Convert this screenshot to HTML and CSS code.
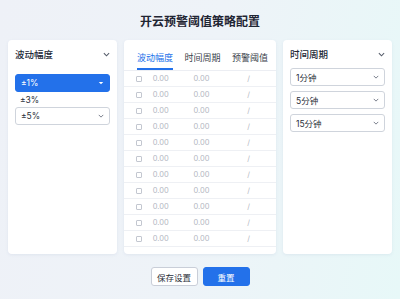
FILE: index.html
```html
<!DOCTYPE html>
<html lang="zh-CN">
<head>
    <meta charset="UTF-8" />
    <title>开云预警阈值策略配置</title>
    <link rel="stylesheet" href="styles.css">
</head>
<body>
    <div class="page">
        <h1 class="page_title">开云预警阈值策略配置</h1>

        <div class="columns">
            <!-- 波动幅度 -->
            <div class="card side_card">
                <div class="card_head">
                    <span>波动幅度</span>
                    <svg class="chev" viewBox="0 0 8 5"><path d="M1 1l3 3 3-3" /></svg>
                </div>
                <div class="amp_list">
                    <div class="select active">
                        <span>±1%</span>
                        <svg class="caret" viewBox="0 0 8 5"><path d="M1 1h6L4 4z" /></svg>
                    </div>
                    <div class="option_text">±3%</div>
                    <div class="select">
                        <span>±5%</span>
                        <svg class="chev" viewBox="0 0 8 5"><path d="M1 1l3 3 3-3" /></svg>
                    </div>
                </div>
            </div>

            <!-- table -->
            <div class="card table_card">
                <div class="tabs">
                    <span class="tab current">波动幅度</span>
                    <span class="tab">时间周期</span>
                    <span class="tab">预警阈值</span>
                </div>
                <div class="rows" id="rows"></div>
            </div>

            <!-- 时间周期 -->
            <div class="card side_card">
                <div class="card_head">
                    <span>时间周期</span>
                    <svg class="chev" viewBox="0 0 8 5"><path d="M1 1l3 3 3-3" /></svg>
                </div>
                <div class="period_list">
                    <div class="select">
                        <span>1分钟</span>
                        <svg class="chev" viewBox="0 0 8 5"><path d="M1 1l3 3 3-3" /></svg>
                    </div>
                    <div class="select">
                        <span>5分钟</span>
                        <svg class="chev" viewBox="0 0 8 5"><path d="M1 1l3 3 3-3" /></svg>
                    </div>
                    <div class="select">
                        <span>15分钟</span>
                        <svg class="chev" viewBox="0 0 8 5"><path d="M1 1l3 3 3-3" /></svg>
                    </div>
                </div>
            </div>
        </div>

        <div class="actions">
            <button class="btn">保存设置</button>
            <button class="btn primary">重置</button>
        </div>
    </div>

    <script>
        // fill the table with empty threshold rows
        const rows = document.getElementById('rows');
        for (let i = 0; i < 11; i++) {
            const row = document.createElement('div');
            row.className = 'row';
            row.innerHTML = '<span class="box"></span><span class="cell">0.00</span><span class="cell">0.00</span><span class="cell slash">/</span>';
            rows.appendChild(row);
        }
    </script>
</body>
</html>
```

FILE: styles.css
```css
* {
    margin: 0;
    padding: 0;
    box-sizing: border-box;
    font-family: "Inter", "Noto Sans CJK SC", sans-serif;
}

body {
    width: 400px;
    height: 299px;
    overflow: hidden;
    background: linear-gradient(100deg, #eef1f7 0%, #eef3f8 50%, #e7f8f8 100%);
    color: #222836;
}

.page {
    padding: 0 8px;
}

.page_title {
    height: 40px;
    line-height: 44px;
    text-align: center;
    font-size: 12px;
    font-weight: 700;
    color: #1f2533;
}

.columns {
    display: flex;
    gap: 7px;
    height: 214px;
}

.card {
    background: #ffffff;
    border-radius: 4px;
    box-shadow: 0 1px 3px rgba(120, 140, 180, 0.12);
}

.side_card {
    width: 109px;
    padding: 0 7px;
}

.table_card {
    flex: 1;
    overflow: hidden;
}

.card_head {
    display: flex;
    justify-content: space-between;
    align-items: center;
    height: 27px;
    padding-top: 1px;
    font-size: 9.5px;
    font-weight: 500;
    color: #222836;
}

.chev {
    width: 7px;
    height: 5px;
    fill: none;
    stroke: #555c6a;
    stroke-width: 1.2;
}

.amp_list {
    padding-top: 7px;
}

.period_list {
    display: flex;
    flex-direction: column;
    gap: 5px;
    padding-top: 1px;
}

/* select boxes */
.select {
    height: 18px;
    display: flex;
    justify-content: space-between;
    align-items: center;
    padding: 0 5px 0 5px;
    border: 1px solid #cfd4dc;
    border-radius: 3px;
    font-size: 8.5px;
    color: #2a2f3a;
    background: #ffffff;
}

.select .chev {
    width: 6px;
    height: 4px;
    stroke: #6c7280;
}

.select.active {
    background: #2371ea;
    border-color: #2371ea;
    color: #ffffff;
}

.caret {
    width: 6px;
    height: 4px;
    fill: #ffffff;
}

.option_text {
    height: 15px;
    line-height: 17px;
    padding-left: 5px;
    font-size: 8.5px;
    color: #2a2f3a;
}

/* tabs */
.tabs {
    display: flex;
    justify-content: space-between;
    height: 31px;
    padding: 0 8px 0 13px;
    border-bottom: 1px solid #eceef3;
}

.tab {
    padding-top: 11px;
    font-size: 9px;
    color: #3a3f4b;
    border-bottom: 2px solid transparent;
}

.tab.current {
    color: #2371ea;
    border-bottom-color: #2371ea;
}

.row {
    display: flex;
    align-items: center;
    height: 16px;
    padding-left: 12px;
    border-bottom: 1px solid #eef0f4;
    font-size: 7.5px;
    color: #b3b7c2;
}

.box {
    width: 6px;
    height: 6px;
    border: 1px solid #c3c7d0;
    border-radius: 1px;
    margin-right: 11px;
}

.cell {
    width: 44px;
}

.slash {
    padding-left: 13px;
}

/* bottom buttons */
.actions {
    display: flex;
    justify-content: center;
    gap: 5px;
    padding-top: 13px;
}

.btn {
    width: 47px;
    height: 19px;
    border: 1px solid #c9ced8;
    border-radius: 3px;
    background: #ffffff;
    font-size: 8.5px;
    color: #2a2f3a;
    cursor: pointer;
}

.btn.primary {
    background: #2371ea;
    border-color: #2371ea;
    color: #ffffff;
}
```
